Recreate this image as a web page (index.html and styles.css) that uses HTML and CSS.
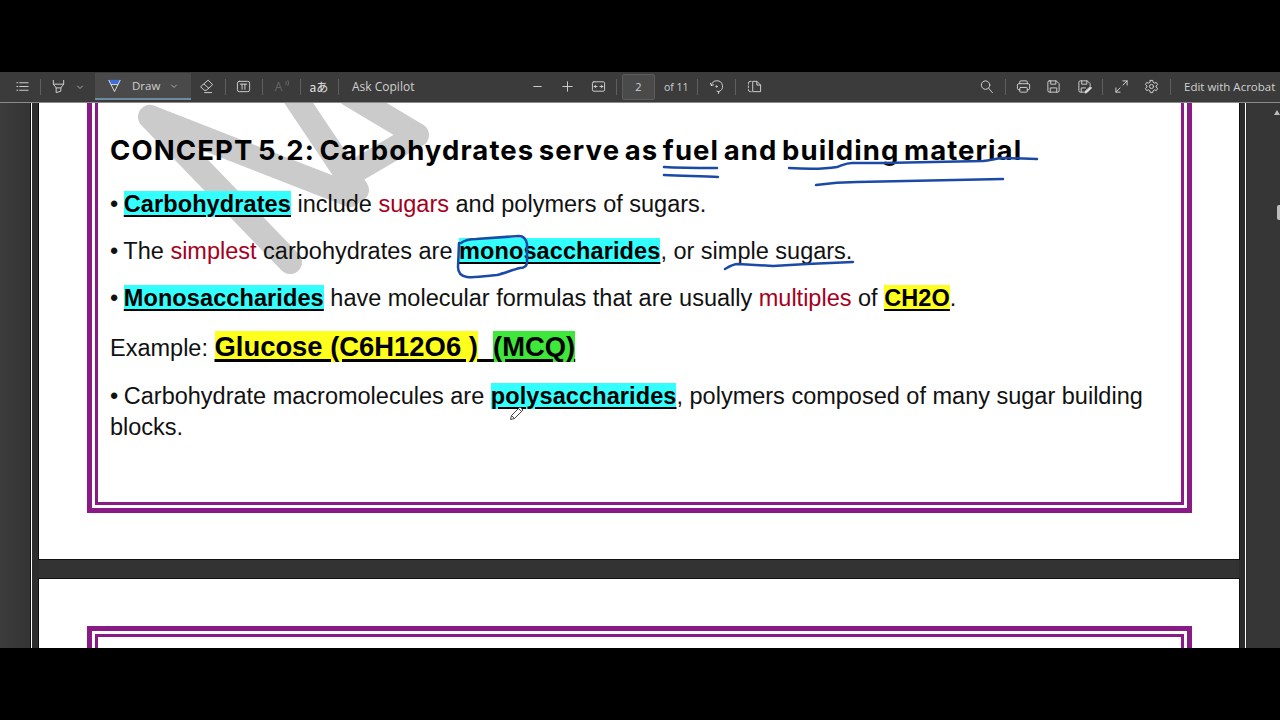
FILE: index.html
```html
<!DOCTYPE html>
<html lang="en">
<head>
<meta charset="utf-8">
<title>Carbohydrates PDF</title>
<link rel="stylesheet" href="styles.css">
</head>
<body>
<div class="app">
  <header class="toolbar">
    <div class="tb-group">
      <button class="btn first"><svg viewBox="0 0 16 16"><path d="M2 4h1M2 8h1M2 12h1M5 4h9M5 8h9M5 12h9"/></svg></button>
      <i class="sep"></i>
      <button class="btn"><svg viewBox="0 0 16 16"><path d="M2.500 1.500v4l3 4v5l5-1.500v-3.500l3-4v-4M2.500 5.500h11M5.500 9.500h5"/></svg></button>
      <button class="chev"><svg viewBox="0 0 10 10"><path d="M2.500 4l2.500 2.500L7.500 4"/></svg></button>
      <div class="draw-tab">
        <svg class="draw-icon" viewBox="0 0 16 16"><path class="blue" d="M2 2.500h12l-2 3.500H4z"/><path d="M2 2.500l6 12 6-12M4.500 7h7"/></svg>
        <span class="draw-label">Draw</span>
        <svg class="draw-chev" viewBox="0 0 10 10"><path d="M2.500 4l2.500 2.500L7.500 4"/></svg>
      </div>
      <button class="btn"><svg viewBox="0 0 16 16"><path d="M10 1.500l4.500 4.500-6.500 6H5.500L2 8.500zM5.500 5.500l5 4.500M6 14.500h7.500"/></svg></button>
      <i class="sep wide"></i>
      <button class="btn tight"><svg viewBox="0 0 16 16"><rect x="1.500" y="2.500" width="13" height="11" rx="2"/><path d="M4.500 5.500h7M6.500 5.500v5.500M9.500 5.500v5.500"/></svg></button>
      <i class="sep wide"></i>
      <button class="btn dim"><span class="read-a">A</span><svg class="read-w" viewBox="0 0 6 8"><path d="M1 1.500a3 3 0 0 1 0 3M3 .5a5 5 0 0 1 0 5"/></svg></button>
      <i class="sep wide"></i>
      <button class="btn trans">aあ</button>
      <i class="sep wide"></i>
      <span class="copilot">Ask Copilot</span>
    </div>
    <div class="tb-group">
      <button class="btn"><svg viewBox="0 0 16 16"><path d="M4 8h8"/></svg></button>
      <button class="btn"><svg viewBox="0 0 16 16"><path d="M3 8h10M8 3v10"/></svg></button>
      <button class="btn shift"><svg viewBox="0 0 16 16"><rect x="1.500" y="3" width="13" height="10" rx="1.500"/><path d="M3.500 8h3M3.500 8l1.500-1.500M3.500 8l1.500 1.500M12.500 8h-3M12.500 8L11 6.500M12.500 8L11 9.500"/></svg></button>
      <i class="sep"></i>
      <span class="page-input">2</span>
      <span class="page-of">of 11</span>
      <i class="sep of-sep"></i>
      <button class="btn"><svg viewBox="0 0 16 16"><path d="M2.500 7a6 6 0 1 1 8 6.500"/><path d="M2.500 7L1.500 4.500M2.500 7l2.500-.8M10.500 13.500l-.5 2M10.500 13.500l-2-.5"/><circle cx="8" cy="8" r=".8"/></svg></button>
      <i class="sep wide"></i>
      <button class="btn"><svg viewBox="0 0 16 16"><path d="M6.500 2.500h4l4 4v7h-8zM10.500 2.500v4h4"/><path d="M4.500 2.500h-1a2 2 0 0 0-2 2v1M1.500 7.500v1.500M1.500 11v.5a2 2 0 0 0 2 2h1"/></svg></button>
    </div>
    <div class="tb-group">
      <button class="btn"><svg viewBox="0 0 16 16"><circle cx="7" cy="6.500" r="4.500"/><path d="M10.300 10l4 4.500"/></svg></button>
      <i class="sep narrow"></i>
      <button class="btn"><svg viewBox="0 0 16 16"><path d="M4 5V3a1 1 0 0 1 1-1h6a1 1 0 0 1 1 1v2M4 11.500H3a1.500 1.500 0 0 1-1.500-1.500V6.500A1.500 1.500 0 0 1 3 5h10a1.500 1.500 0 0 1 1.500 1.500V10a1.500 1.500 0 0 1-1.500 1.500h-1"/><rect x="4" y="9" width="8" height="5" rx=".8"/></svg></button>
      <button class="btn"><svg viewBox="0 0 16 16"><path d="M3.500 2h7.500l3 3v7.500a1.500 1.500 0 0 1-1.500 1.500h-9A1.500 1.500 0 0 1 2 12.500v-9A1.500 1.500 0 0 1 3.500 2z"/><path d="M5 2v3.500h5.500V2M4.500 14V9.500h7V14"/></svg></button>
      <button class="btn shift"><svg viewBox="0 0 16 16"><path d="M7.500 14H3.500A1.500 1.500 0 0 1 2 12.500v-9A1.500 1.500 0 0 1 3.500 2h7.500l3 3v2"/><path d="M5 2v3.500h5.500V2M4.500 14V9.500h4.500"/><path class="solid" d="M14.500 8.500l1 1-5 5-2 .5.500-2z"/></svg></button>
      <i class="sep"></i>
      <button class="btn wider"><svg viewBox="0 0 16 16"><path d="M9.500 6.500L14 2M2 14l4.500-4.500M9.500 2H14v4.500M2 9.500V14h4.500"/></svg></button>
      <button class="btn"><svg viewBox="0 0 16 16"><path d="M6.700 1.500h2.600l.4 2 1.500.9 2-.7 1.300 2.300-1.600 1.300v1.400l1.600 1.300-1.300 2.300-2-.7-1.500.9-.4 2H6.700l-.4-2-1.500-.9-2 .7-1.300-2.300L3.100 8.700V7.300L1.500 6l1.300-2.300 2 .7 1.500-.9z"/><circle cx="8" cy="8" r="2.200"/></svg></button>
      <i class="sep wide"></i>
      <span class="acrobat">Edit with Acrobat</span>
    </div>
  </header>

  <main class="viewer">
    <div class="gutter"></div>
    <div class="rule-l"></div>
    <div class="pages">
      <section class="page">
        <svg class="watermark" viewBox="39 103 1200 456" width="1200" height="456"><path d="M290 262L150 117L350 195M357 190L290 90M417 135L350 95M417 135L345 177"/></svg>
        <div class="frame cut">
          <div class="frame-inner">
            <h1>CONCEPT 5.2: Carbohydrates serve as fuel and building material</h1>
            <p class="l1"><span class="bu">•</span> <b class="cy">Carbohydrates</b> include <span class="red">sugars</span> and polymers of sugars.</p>
            <p class="l2"><span class="bu">•</span> The <span class="red">simplest</span> carbohydrates are <b class="cy">monosaccharides</b>, or simple sugars.</p>
            <p class="l3"><span class="bu">•</span> <b class="cy">Monosaccharides</b> have molecular formulas that are usually <span class="red">multiples</span> of <b class="ye">CH2O</b>.</p>
            <p class="l4">Example: <b class="big"><span class="ye">Glucose (C6H12O6 )</span>&nbsp;&nbsp;<span class="gr">(MCQ)</span></b></p>
            <p class="l5"><span class="bu">•</span> Carbohydrate macromolecules are <b class="cy">polysaccharides</b>, polymers composed of many sugar building blocks.</p>
          </div>
        </div>
      </section>
      <section class="page second">
        <div class="frame">
          <div class="frame-inner"></div>
        </div>
      </section>
    </div>
    <div class="rule-r"></div>
    <div class="scroll"><i class="arrow"></i><i class="thumb"></i></div>
    <svg class="ink" viewBox="0 103 1280 545" width="1280" height="545">
      <path d="M664 167C680 168 700 168 717 168"/>
      <path d="M664 175C685 176 705 176 718 177"/>
      <path d="M789 168C805 169 825 169 837 167C843 165 846 163 852 163L883 163L983 161C992 160 998 158 1005 158L1037 159"/>
      <path d="M816 185C830 183 845 182 857 182L1003 179"/>
      <path d="M461 243C465 240 470 239 476 239L519 236C524 236 526 239 527 244L527 262C527 266 524 268 520 268C512 270 505 273 497 275C487 276 475 278 467 277C460 276 458 272 458 267L459 243"/>
      <path d="M725 269C730 266 733 264 738 264L773 266L807 264L853 262"/>
    </svg>
    <svg class="pencil" viewBox="0 0 16 16" width="16" height="16"><path d="M1.500 14.500l1-4L11 2l3 3-8.500 8.500z"/><path d="M9.500 3.500l3 3M2.500 10.500l3 3"/></svg>
  </main>
</div>
</body>
</html>
```
FILE: styles.css
```css
* { box-sizing: border-box; }
html, body { margin: 0; height: 100%; background: #000; overflow: hidden; }
body { padding-top: 72px; font-family: "Liberation Sans", Arial, sans-serif; }
.app { height: 576px; display: flex; flex-direction: column; }

.toolbar {
  height: 31px;
  flex: none;
  display: grid;
  grid-template-columns: 522px 449px 1fr;
  background: #3b3b3b;
  border-bottom: 1px solid #8a8a8a;
  color: #d0d0d0;
  font: 12px "Open Sans", "Noto Sans", sans-serif;
}
.tb-group { display: flex; align-items: center; height: 29px; }
.btn {
  flex: none; width: 30px; height: 29px; padding: 0; border: 0; background: none;
  color: inherit; font: inherit; display: flex; align-items: center; justify-content: center; position: relative;
}
.btn.first { margin-left: 7px; }
.btn.shift { margin-left: 1px; }
.btn.tight { margin-left: -1px; }
.btn.wider { margin-left: 1px; }
.btn svg, .draw-tab svg, .chev svg { width: 15px; height: 15px; fill: none; stroke: #d4d4d4; stroke-width: 1; stroke-linecap: round; stroke-linejoin: round; }
.btn svg .solid { fill: #e4e4e4; stroke: #e4e4e4; }
.chev { flex: none; width: 14px; height: 29px; padding: 0; border: 0; background: none; display: flex; align-items: center; justify-content: center; }
.chev svg { width: 10px; height: 10px; stroke: #aaa; }
.sep { flex: none; width: 6px; height: 18px; position: relative; display: block; }
.sep::after { content: ""; position: absolute; left: 50%; top: 1px; bottom: 1px; width: 1px; background: #5f5f5f; }
.sep.wide { width: 8px; }
.sep.narrow { width: 7px; }
.sep.of-sep { margin-left: 8px; margin-right: 1px; width: 6px; }

.draw-tab {
  flex: none; width: 96px; height: 27px; margin-left: 8px; display: flex; align-items: center;
  background: #4a4a4a; border-bottom: 2px solid #6e8ca0; position: relative;
}
.draw-tab .draw-icon { width: 15px; height: 15px; margin-left: 12px; stroke: #e0e0e0; }
.draw-tab .draw-icon .blue { fill: #3f6fd8; stroke: #3f6fd8; }
.draw-label { margin-left: 10px; color: #cfcfcf; font-size: 11.500px; }
.draw-tab .draw-chev { width: 10px; height: 10px; margin-left: 9px; stroke: #aaa; }
.dim { color: #6a6a6a; }
.read-a { font-size: 12px; color: #666; margin-right: 5px; }
.btn svg.read-w { position: absolute; width: 6px; height: 8px; left: 19px; top: 8px; stroke: #666; }
.trans { font: 12px "Noto Sans CJK JP", "Noto Sans", sans-serif; color: #e4e4e4; }
.copilot { margin-left: 10px; white-space: nowrap; font-size: 12px; line-height: 16px; }
.page-input {
  flex: none; width: 33px; height: 26px; margin-left: 3px; display: flex; align-items: center; justify-content: center;
  background: #4a4a4a; border: 1px solid #5c5c5c; border-radius: 2px; font-size: 11px;
}
.page-of { margin-left: 9px; font-size: 10.500px; white-space: nowrap; color: #cfcfcf; width: 22px; }
.acrobat { margin-left: 10px; white-space: nowrap; font-size: 11.500px; }

.viewer { flex: 1; min-height: 0; display: flex; background: #333; overflow: hidden; position: relative; }
.gutter { flex: none; width: 30px; background: linear-gradient(90deg, #3c3c3c, #343434); }
.rule-l { flex: none; width: 9px; border-left: 1px solid #111; background: linear-gradient(90deg, #fff 1px, #2e2e2e 1px); }
.pages { flex: none; width: 1200px; display: flex; flex-direction: column; gap: 20px; }
.page { flex: none; background: #fff; position: relative; outline: 1px solid #111; padding: 0 47px 46px 48px; }
.page.second { padding-top: 47px; padding-bottom: 0; }
.rule-r { flex: none; width: 8px; background: linear-gradient(90deg, #2b2b2b 6px, #fff 6px, #fff 7px, #2b2b2b 7px); }
.scroll { flex: 1; background: #363636; position: relative; }
.arrow { position: absolute; right: 0; top: 7px; border: 3px solid transparent; border-bottom: 5px solid #bbb; border-top: 0; }
.thumb { position: absolute; right: 0; top: 102px; width: 3px; height: 15px; background: #bdbdbd; border-radius: 2px 0 0 2px; }
.watermark { position: absolute; left: 0; top: 0; }
.watermark path { fill: none; stroke: #cbcbcb; stroke-width: 24; stroke-linecap: round; stroke-linejoin: round; }

.frame { border: 5px solid #8a1a86; padding: 3px; position: relative; }
.frame.cut { border-top: 0; padding-top: 0; height: 410px; }
.frame-inner { border: 3px solid #8a1a86; height: 100%; padding-left: 12px; padding-right: 30px; }
.frame.cut .frame-inner { border-top: 0; height: 100%; }
.second .frame { height: 60px; }

h1 {
  margin: 0; padding-top: 29px; font: 700 27.500px/36px Inter, sans-serif; letter-spacing: 1.090px; word-spacing: -3px; color: #000; white-space: nowrap; position: relative;
}
p { margin: 0; font-size: 23.500px; line-height: 31px; color: #111; position: relative; }
.bu { margin-right: -1px; }
.l1 { margin-top: 21px; }
.l2, .l3 { margin-top: 16px; }
.l4 { margin-top: 17px; }
.l5 { margin-top: 17px; }
b { font-weight: 700; color: #000; letter-spacing: .1px; text-decoration: underline; text-underline-offset: 3px; text-decoration-thickness: 2px; }
.cy { background: #33ffff; }
.ye { background: #ffff1e; }
.gr { background: #3ee83a; }
.big { font-size: 27.400px; letter-spacing: 0; text-decoration-thickness: 3px; }
.red { color: #a50021; }

.ink { position: absolute; left: 0; top: 0; pointer-events: none; }
.ink path { fill: none; stroke: #1b4aa6; stroke-width: 2.500; stroke-linecap: round; stroke-linejoin: round; }
.pencil { position: absolute; left: 509px; top: 302px; }
.pencil path { fill: #fff; stroke: #444; stroke-width: 1; stroke-linejoin: round; }
```
